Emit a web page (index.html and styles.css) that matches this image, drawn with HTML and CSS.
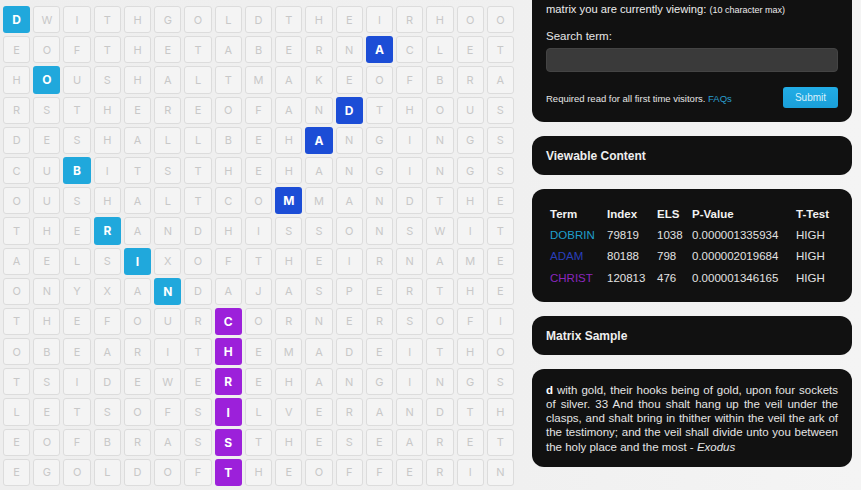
FILE: index.html
```html
<!DOCTYPE html>
<html lang="en">
<head>
<meta charset="utf-8">
<title>Matrix</title>
<link rel="stylesheet" href="styles.css">
</head>
<body>
<main class="page">
  <section class="matrix">
    <div class="grid">
      <span class="hl cyan">D</span><span>W</span><span>I</span><span>T</span><span>H</span><span>G</span><span>O</span><span>L</span><span>D</span><span>T</span><span>H</span><span>E</span><span>I</span><span>R</span><span>H</span><span>O</span><span>O</span>
      <span>E</span><span>O</span><span>F</span><span>T</span><span>H</span><span>E</span><span>T</span><span>A</span><span>B</span><span>E</span><span>R</span><span>N</span><span class="hl blue">A</span><span>C</span><span>L</span><span>E</span><span>T</span>
      <span>H</span><span class="hl cyan">O</span><span>U</span><span>S</span><span>H</span><span>A</span><span>L</span><span>T</span><span>M</span><span>A</span><span>K</span><span>E</span><span>O</span><span>F</span><span>B</span><span>R</span><span>A</span>
      <span>R</span><span>S</span><span>T</span><span>H</span><span>E</span><span>R</span><span>E</span><span>O</span><span>F</span><span>A</span><span>N</span><span class="hl blue">D</span><span>T</span><span>H</span><span>O</span><span>U</span><span>S</span>
      <span>D</span><span>E</span><span>S</span><span>H</span><span>A</span><span>L</span><span>L</span><span>B</span><span>E</span><span>H</span><span class="hl blue">A</span><span>N</span><span>G</span><span>I</span><span>N</span><span>G</span><span>S</span>
      <span>C</span><span>U</span><span class="hl cyan">B</span><span>I</span><span>T</span><span>S</span><span>T</span><span>H</span><span>E</span><span>H</span><span>A</span><span>N</span><span>G</span><span>I</span><span>N</span><span>G</span><span>S</span>
      <span>O</span><span>U</span><span>S</span><span>H</span><span>A</span><span>L</span><span>T</span><span>C</span><span>O</span><span class="hl blue">M</span><span>M</span><span>A</span><span>N</span><span>D</span><span>T</span><span>H</span><span>E</span>
      <span>T</span><span>H</span><span>E</span><span class="hl cyan">R</span><span>A</span><span>N</span><span>D</span><span>H</span><span>I</span><span>S</span><span>S</span><span>O</span><span>N</span><span>S</span><span>W</span><span>I</span><span>T</span>
      <span>A</span><span>E</span><span>L</span><span>S</span><span class="hl cyan">I</span><span>X</span><span>O</span><span>F</span><span>T</span><span>H</span><span>E</span><span>I</span><span>R</span><span>N</span><span>A</span><span>M</span><span>E</span>
      <span>O</span><span>N</span><span>Y</span><span>X</span><span>A</span><span class="hl cyan">N</span><span>D</span><span>A</span><span>J</span><span>A</span><span>S</span><span>P</span><span>E</span><span>R</span><span>T</span><span>H</span><span>E</span>
      <span>T</span><span>H</span><span>E</span><span>F</span><span>O</span><span>U</span><span>R</span><span class="hl purple">C</span><span>O</span><span>R</span><span>N</span><span>E</span><span>R</span><span>S</span><span>O</span><span>F</span><span>I</span>
      <span>O</span><span>B</span><span>E</span><span>A</span><span>R</span><span>I</span><span>T</span><span class="hl purple">H</span><span>E</span><span>M</span><span>A</span><span>D</span><span>E</span><span>I</span><span>T</span><span>H</span><span>O</span>
      <span>T</span><span>S</span><span>I</span><span>D</span><span>E</span><span>W</span><span>E</span><span class="hl purple">R</span><span>E</span><span>H</span><span>A</span><span>N</span><span>G</span><span>I</span><span>N</span><span>G</span><span>S</span>
      <span>L</span><span>E</span><span>T</span><span>S</span><span>O</span><span>F</span><span>S</span><span class="hl purple">I</span><span>L</span><span>V</span><span>E</span><span>R</span><span>A</span><span>N</span><span>D</span><span>T</span><span>H</span>
      <span>E</span><span>O</span><span>F</span><span>B</span><span>R</span><span>A</span><span>S</span><span class="hl purple">S</span><span>T</span><span>H</span><span>E</span><span>S</span><span>E</span><span>A</span><span>R</span><span>E</span><span>T</span>
      <span>E</span><span>G</span><span>O</span><span>L</span><span>D</span><span>O</span><span>F</span><span class="hl purple">T</span><span>H</span><span>E</span><span>O</span><span>F</span><span>F</span><span>E</span><span>R</span><span>I</span><span>N</span>
    </div>
  </section>

  <aside class="side">
    <div class="card search">
      <p class="intro">Enter the term you would like to search for within the<br>matrix you are currently viewing: <small>(10 character max)</small></p>
      <label class="label" for="term">Search term:</label>
      <input class="field" id="term" type="text">
      <div class="actions">
        <span class="note">Required read for all first time visitors. <a class="link" href="#">FAQs</a></span>
        <button class="submit" type="button">Submit</button>
      </div>
    </div>

    <div class="card heading">Viewable Content</div>

    <div class="card results">
      <table class="table">
        <thead>
          <tr><th class="c-term">Term</th><th class="c-index">Index</th><th class="c-els">ELS</th><th class="c-p">P-Value</th><th class="c-t">T-Test</th></tr>
        </thead>
        <tbody>
          <tr><td class="t-cyan">DOBRIN</td><td>79819</td><td>1038</td><td>0.000001335934</td><td>HIGH</td></tr>
          <tr><td class="t-blue">ADAM</td><td>80188</td><td>798</td><td>0.000002019684</td><td>HIGH</td></tr>
          <tr><td class="t-purple">CHRIST</td><td>120813</td><td>476</td><td>0.000001346165</td><td>HIGH</td></tr>
        </tbody>
      </table>
    </div>

    <div class="card heading">Matrix Sample</div>

    <div class="card sample">
      <p class="sample-text"><b>d</b> with gold, their hooks being of gold, upon four sockets of silver. 33 And thou shalt hang up the veil under the clasps, and shalt bring in thither within the veil the ark of the testimony; and the veil shall divide unto you between the holy place and the most - <i>Exodus</i></p>
    </div>
  </aside>
</main>
</body>
</html>
```

FILE: styles.css
```css
* { box-sizing: border-box; }

html, body {
  margin: 0;
  padding: 0;
  height: 100%;
  overflow: hidden;
}

body {
  background: linear-gradient(90deg, #eeeeee 0%, #f0f0f0 60%, #f4f4f4 100%);
  font-family: "Liberation Sans", Arial, sans-serif;
}

.page {
  display: flex;
  align-items: flex-start;
}

.matrix {
  padding: 6px 0 0 3px;
}

.grid {
  width: 511px;
  display: grid;
  grid-template-columns: repeat(17, 1fr);
  grid-auto-rows: 27.2px;
  gap: 3px;
}

.grid span {
  display: flex;
  align-items: center;
  justify-content: center;
  background: #f4f4f4;
  border: 1px solid #dcdcdc;
  border-radius: 3px;
  font-family: Inter, "Noto Sans", sans-serif;
  font-size: 11px;
  color: #c8c8c8;
}

.grid span.hl {
  border-color: transparent;
  color: #ffffff;
  font-weight: 700;
  font-size: 12px;
}

.grid span.cyan { background: #20a8dc; }
.grid span.blue { background: #1c4dd6; }
.grid span.purple { background: #9c20da; }

.side {
  width: 320px;
  margin-left: 18px;
  margin-top: -26px;
  display: flex;
  flex-direction: column;
  gap: 14px;
}

.card {
  background: #111111;
  border-radius: 12px;
  color: #ececec;
  padding: 0 14px;
}

.search {
  padding-top: 11px;
  padding-bottom: 14px;
}

.intro {
  margin: 0;
  font-size: 11.2px;
  line-height: 16px;
  color: #ececec;
}

.intro small {
  font-size: 9px;
}

.label {
  display: block;
  margin-top: 10px;
  font-size: 11.5px;
  line-height: 16px;
  color: #e6e6e6;
}

.field {
  display: block;
  width: 100%;
  height: 24px;
  margin-top: 4px;
  background: #3a3a3a;
  border: 1px solid #444444;
  border-radius: 4px;
}

.actions {
  margin-top: 14.5px;
  display: flex;
  align-items: center;
  justify-content: space-between;
}

.note {
  font-size: 9.5px;
  color: #e6e6e6;
  padding-top: 2px;
}

.link {
  color: #2b9fcf;
  text-decoration: none;
}

.submit {
  width: 55px;
  height: 21px;
  padding: 0;
  border: 0;
  border-radius: 3px;
  background: linear-gradient(180deg, #22ade6 0%, #1a9fd9 100%);
  color: #d8f1fc;
  font-family: "Liberation Sans", Arial, sans-serif;
  font-size: 10px;
}

.heading {
  height: 39.5px;
  display: flex;
  align-items: center;
  padding-top: 2px;
  font-size: 12px;
  font-weight: 700;
  color: #eeeeee;
}

.results {
  padding: 14px 14px 13.5px;
}

.table {
  border-collapse: collapse;
  font-size: 11.5px;
  color: #e2e2e2;
}

.table th,
.table td {
  height: 21.3px;
  padding: 0 4px;
  text-align: left;
  white-space: nowrap;
}

.table th {
  font-weight: 700;
  color: #f2f2f2;
}

.c-term { width: 57px; }
.c-index { width: 50px; }
.c-els { width: 35px; }
.c-p { width: 104px; }

.t-cyan { color: #1f9fcc; }
.t-blue { color: #2a3fba; }
.t-purple { color: #8a27be; }

.sample {
  padding-top: 14px;
  padding-bottom: 13px;
}

.sample-text {
  margin: 0;
  font-size: 11.5px;
  line-height: 14.1px;
  text-align: justify;
  color: #e4e4e4;
}

.sample-text b { color: #ffffff; }
```
